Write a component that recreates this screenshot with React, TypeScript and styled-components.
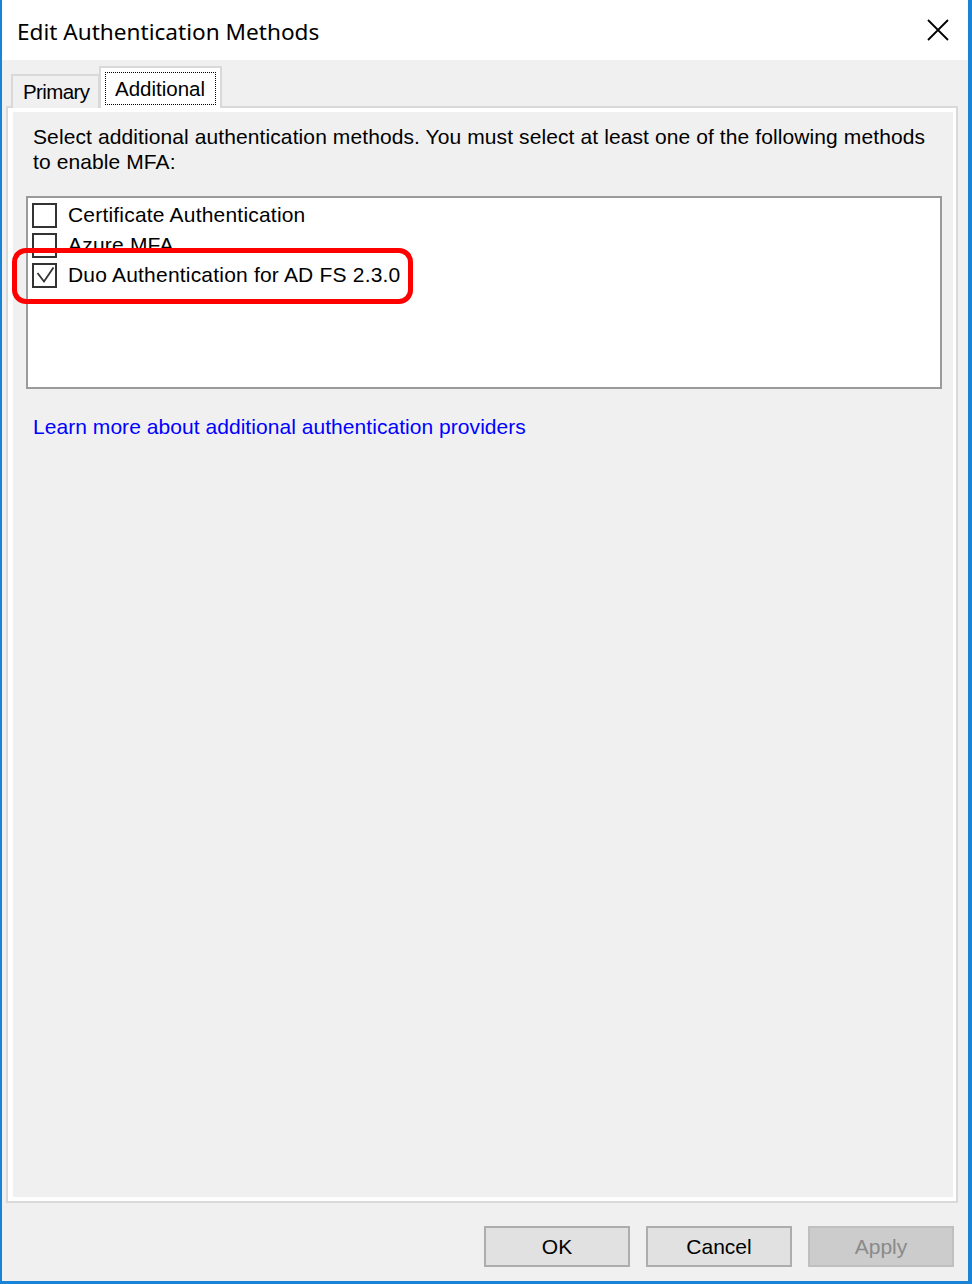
import React from "react";
import styled, { createGlobalStyle } from "styled-components";

const Global = createGlobalStyle`
  html, body { margin: 0; padding: 0; background: #ffffff; }
  body { font-family: "Liberation Sans", Arial, sans-serif; }
`;

const Window = styled.div`
  width: 972px;
  height: 1284px;
  box-sizing: border-box;
  border-left: 2px solid #1883d7;
  border-right: 4px solid #1883d7;
  border-bottom: 3px solid #1883d7;
  display: flex;
  flex-direction: column;
  background: #f0f0f0;
`;

const TitleBar = styled.div`
  height: 60px;
  flex: none;
  background: #ffffff;
  display: flex;
  align-items: center;
  justify-content: space-between;
  padding: 0 19px 0 15px;
`;

const Title = styled.span`
  font-family: "Noto Sans", "Open Sans", sans-serif;
  font-size: 22.6px;
  color: #000000;
  margin-top: 2px;
`;

const CloseButton = styled.div`
  width: 22px;
  height: 22px;
  display: flex;
  align-items: center;
  justify-content: center;
`;

const Body = styled.div`
  flex: 1;
  display: flex;
  flex-direction: column;
  padding: 6px 10px 0 4px;
  min-height: 0;
`;

const TabStrip = styled.div`
  display: flex;
  align-items: flex-end;
  height: 42px;
  padding-left: 5px;
  margin-bottom: -2px;
  position: relative;
  z-index: 1;
`;

const Tab = styled.div<{ $active?: boolean; $width: number }>`
  box-sizing: border-box;
  width: ${(p) => p.$width}px;
  height: ${(p) => (p.$active ? 42 : 34)}px;
  border: 2px solid #d9d9d9;
  border-bottom: none;
  background: ${(p) => (p.$active ? "#ffffff" : "#f0f0f0")};
  margin-left: ${(p) => (p.$active ? -1 : 0)}px;
  padding: ${(p) => (p.$active ? "4px 4px 0 4px" : "0 0 0 10px")};
  display: flex;
  align-items: ${(p) => (p.$active ? "flex-start" : "center")};
  font-size: 20.5px;
  letter-spacing: ${(p) => (p.$active ? "0" : "-0.6px")};
  color: #000;
  white-space: nowrap;
`;

const FocusRect = styled.div`
  box-sizing: border-box;
  height: 33px;
  flex: 1;
  border: 1px dotted #000000;
  padding-left: 9px;
  display: flex;
  align-items: center;
`;

const Pane = styled.div`
  flex: 1;
  display: flex;
  flex-direction: column;
  border: 2px solid #d9d9d9;
  background: #ffffff;
  padding: 4px 3px 4px 5px;
  min-height: 0;
`;

const Interior = styled.div`
  flex: 1;
  position: relative;
  background: #f0f0f0;
  padding: 12px 11px 0 13px;
`;

const Intro = styled.p`
  margin: 0;
  padding-left: 7px;
  font-size: 21px;
  letter-spacing: 0.1px;
  line-height: 25px;
  color: #000;
`;

const ListBox = styled.div`
  box-sizing: border-box;
  height: 193px;
  margin-top: 22px;
  border: 2px solid #9a9a9a;
  background: #ffffff;
  padding: 2px 0 0 4px;
`;

const Row = styled.div`
  height: 30px;
  display: flex;
  align-items: center;
  gap: 11px;
  font-size: 21px;
  letter-spacing: 0.2px;
  color: #000;
`;

const Box = styled.div`
  box-sizing: border-box;
  width: 25px;
  height: 25px;
  border: 2px solid #333333;
  background: #ffffff;
  flex: none;
  display: flex;
`;

const Link = styled.a`
  display: block;
  margin-top: 25px;
  padding-left: 7px;
  font-size: 21px;
  letter-spacing: 0.05px;
  line-height: 25px;
  color: #0000ff;
  text-decoration: none;
`;

const Highlight = styled.div`
  position: absolute;
  left: -1px;
  top: 136px;
  width: 401px;
  height: 56px;
  box-sizing: border-box;
  border: 5px solid #ff0000;
  border-radius: 14px;
  pointer-events: none;
`;

const Footer = styled.div`
  display: flex;
  justify-content: flex-end;
  gap: 16px;
  padding: 23px 4px 14px;
`;

const Button = styled.div<{ $disabled?: boolean }>`
  box-sizing: border-box;
  width: 146px;
  height: 41px;
  border: 2px solid ${(p) => (p.$disabled ? "#bfbfbf" : "#adadad")};
  background: ${(p) => (p.$disabled ? "#cccccc" : "#e1e1e1")};
  color: ${(p) => (p.$disabled ? "#8a8a8a" : "#000000")};
  font-size: 21px;
  display: flex;
  align-items: center;
  justify-content: center;
`;

const Check = () => (
  <svg width="21" height="21" viewBox="0 0 21 21">
    <polyline
      points="3.5,8 10,16.5 19.5,2.5"
      fill="none"
      stroke="#333333"
      strokeWidth="1.8"
    />
  </svg>
);

const items = [
  { label: "Certificate Authentication", checked: false },
  { label: "Azure MFA", checked: false },
  { label: "Duo Authentication for AD FS 2.3.0", checked: true },
];

export default function App() {
  return (
    <>
      <Global />
      <Window>
        <TitleBar>
          <Title>Edit Authentication Methods</Title>
          <CloseButton>
            <svg width="22" height="22" viewBox="0 0 22 22">
              <path d="M1 1 L21 21 M21 1 L1 21" stroke="#000" strokeWidth="1.8" />
            </svg>
          </CloseButton>
        </TitleBar>
        <Body>
          <TabStrip>
            <Tab $width={89}>Primary</Tab>
            <Tab $active $width={123}>
              <FocusRect>Additional</FocusRect>
            </Tab>
          </TabStrip>
          <Pane>
            <Interior>
              <Intro>
                Select additional authentication methods. You must select at least one of the following methods
                <br />
                to enable MFA:
              </Intro>
              <ListBox>
                {items.map((it) => (
                  <Row key={it.label}>
                    <Box>{it.checked && <Check />}</Box>
                    <span>{it.label}</span>
                  </Row>
                ))}
              </ListBox>
              <Link href="#">Learn more about additional authentication providers</Link>
              <Highlight />
            </Interior>
          </Pane>
          <Footer>
            <Button>OK</Button>
            <Button>Cancel</Button>
            <Button $disabled>Apply</Button>
          </Footer>
        </Body>
      </Window>
    </>
  );
}
